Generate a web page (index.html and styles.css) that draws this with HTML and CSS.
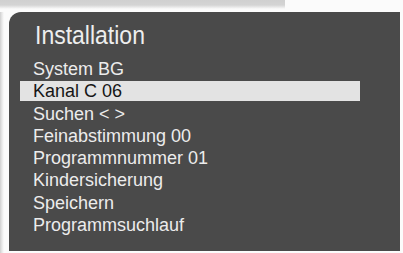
FILE: index.html
```html
<!DOCTYPE html>
<html lang="de">
<head>
<meta charset="utf-8">
<title>Installation</title>
<link rel="stylesheet" href="styles.css">
</head>
<body>
<div class="panel">
  <h1 class="title"><span>Installation</span></h1>
  <ul class="menu">
    <li class="item">System BG</li>
    <li class="item selected">Kanal C 06</li>
    <li class="item">Suchen &lt; &gt;</li>
    <li class="item">Feinabstimmung 00</li>
    <li class="item">Programmnummer 01</li>
    <li class="item">Kindersicherung</li>
    <li class="item">Speichern</li>
    <li class="item">Programmsuchlauf</li>
  </ul>
</div>
</body>
</html>
```
FILE: styles.css
```css
html, body {
  margin: 0;
  padding: 0;
}
body {
  width: 403px;
  height: 253px;
  overflow: hidden;
  background-color: #fbfbfb;
  background-image:
    linear-gradient(to bottom, #d0d0d0 0, #d4d4d4 5px, #fbfbfb 9px),
    linear-gradient(to right, #cfcfcf 0, #e8e8e8 2px, #fbfbfb 4px);
  background-size: 285px 12px, 6px 253px;
  background-repeat: no-repeat;
  font-family: "Liberation Sans", Arial, sans-serif;
  padding-top: 12px;
  padding-left: 9px;
  box-sizing: border-box;
}
.panel {
  width: 391px;
  height: 239px;
  background: #4a4a4a;
  border-top-left-radius: 12px;
  padding: 8px 0 0 11px;
  box-sizing: border-box;
  box-shadow: 0 0 2px rgba(255,255,255,0.8);
}
.title {
  margin: 0 0 8px 0;
  font-weight: normal;
  font-size: 25px;
  line-height: 30px;
  color: #eeeeee;
  padding-left: 15px;
}
.title span {
  display: inline-block;
  transform: scaleX(0.92);
  transform-origin: left center;
}
.menu {
  list-style: none;
  margin: 0;
  padding: 0;
  width: 340px;
}
.item {
  font-size: 18px;
  line-height: 22.3px;
  color: #ececec;
  padding-left: 13px;
}
.item.selected {
  background: #e3e3e3;
  background-clip: content-box;
  color: #161616;
  line-height: 20px;
  padding-top: 0.7px;
  padding-bottom: 1.6px;
  padding-left: 0;
  text-indent: 13px;
}
```
